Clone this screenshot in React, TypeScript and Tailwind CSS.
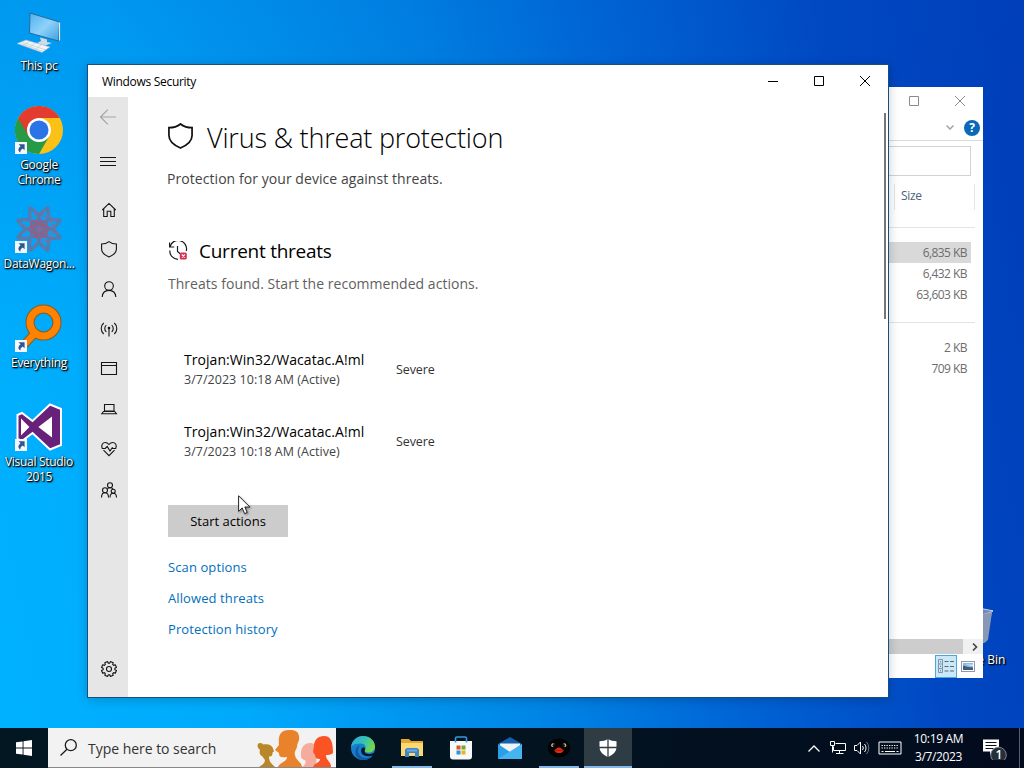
import type { ReactNode } from "react";
import clsx from "clsx";

type IconProps = {
  className?: string;
};

type Threat = {
  name: string;
  detected: string;
  severity: string;
};

const threats: Threat[] = [
  { name: "Trojan:Win32/Wacatac.A!ml", detected: "3/7/2023 10:18 AM (Active)", severity: "Severe" },
  { name: "Trojan:Win32/Wacatac.A!ml", detected: "3/7/2023 10:18 AM (Active)", severity: "Severe" },
];

const gearPath = () => {
  const teeth = 8;
  const points: string[] = [];
  for (let i = 0; i < teeth; i++) {
    const base = (i / teeth) * Math.PI * 2;
    const corners: [number, number][] = [
      [-0.27, 5.9],
      [-0.2, 7.6],
      [0.2, 7.6],
      [0.27, 5.9],
    ];
    corners.forEach(([offset, r]) => {
      const x = 8 + r * Math.cos(base + offset);
      const y = 8 + r * Math.sin(base + offset);
      points.push(`${x.toFixed(2)} ${y.toFixed(2)}`);
    });
  }
  return `M${points.join("L")}Z`;
};

/* ---------- desktop icons ---------- */

function ShortcutArrow() {
  return (
    <svg viewBox="0 0 12 12" className="absolute bottom-0 left-0 size-3">
      <rect width="12" height="12" fill="#f4f8fc" />
      <path d="M3.6 2.3h6v6L7.7 6.5C5.8 7.8 5.2 8.8 5.4 10.6 3 9.3 2.6 6.6 5.5 4.3z" fill="#2c5592" />
    </svg>
  );
}

function PcIcon() {
  return (
    <svg viewBox="0 0 48 48" className="size-12">
      <defs>
        <linearGradient id="screen" x1="0" y1="0" x2="1" y2="1">
          <stop offset="0" stopColor="#4fb0ee" />
          <stop offset="0.5" stopColor="#8ed2fa" />
          <stop offset="1" stopColor="#3d9fe4" />
        </linearGradient>
      </defs>
      <path d="M15 6l29.5 9-1 19-29-8z" fill="url(#screen)" stroke="#27689b" strokeWidth="1" />
      <path d="M44.5 15.5v18" stroke="#dfe9f0" strokeWidth="1.2" />
      <path d="M25 30.5l7 2v2.5l5 1-8 3-7-3 4-2z" fill="#cfdbe4" />
      <path d="M11 33l24 7-8 5.5-25-9z" fill="#f2f5f7" stroke="#9db4c4" strokeWidth="0.6" />
      <path d="M8 35.5l23 7.5M6 36.5l22 8M14 34.5l-6 4.5M20 36l-6 5M26 38l-6 5" stroke="#b7c5cf" strokeWidth="0.6" />
    </svg>
  );
}

function ChromeIcon() {
  return (
    <svg viewBox="0 0 48 48" className="size-12">
      <circle cx="24" cy="24" r="24" fill="#fbc116" />
      <path d="M24 24L3.2 12A24 24 0 0 0 24 48l10.4-18z" fill="#269a46" />
      <path d="M24 12h20.8A24 24 0 0 0 3.2 12l10.4 18L24 24z" fill="#e33b2e" />
      <circle cx="24" cy="24" r="12" fill="#fff" />
      <circle cx="24" cy="24" r="9.5" fill="#2b74e8" />
    </svg>
  );
}

function DataWagonIcon() {
  const angles = [0, 45, 90, 135];
  return (
    <svg viewBox="0 0 48 48" className="size-12">
      <g fill="none" strokeWidth="1.4">
        {angles.map((a) => (
          <g key={a} transform={`rotate(${a} 24 24)`}>
            <path d="M16 2l8 7 8-7 1 13-9 14-9-14zM16 46l8-7 8 7 1-13-9-14-9 14z" stroke="#5f75a5" />
            <path d="M13 6l11 20L35 6M18 12l6-5 6 5M13 42l11-20 11 20" stroke="#8a6c98" strokeWidth="1" />
            <ellipse cx="24" cy="24" rx="5" ry="10" stroke="#a0587c" />
          </g>
        ))}
      </g>
    </svg>
  );
}

function EverythingIcon() {
  return (
    <svg viewBox="0 0 48 48" className="size-12">
      <path d="M20 29L8 42" stroke="#8a5a1c" strokeWidth="8.5" />
      <circle cx="28.5" cy="18.5" r="13.5" fill="none" stroke="#8a5a1c" strokeWidth="9" />
      <circle cx="28.5" cy="18.5" r="13.5" fill="none" stroke="#ff8200" strokeWidth="7" />
      <path d="M21 28L8 42" stroke="#ff8200" strokeWidth="6.5" />
    </svg>
  );
}

function VisualStudioIcon() {
  return (
    <svg viewBox="0 0 48 48" className="size-12">
      <path
        fillRule="evenodd"
        d="M35 1.5l11 4.5v36l-11 4.5L17.5 30 7 38l-4.5-2V12L7 10l10.5 8zM36 15.5L25 24l11 8.5zM7 18v12l6-6z"
        fill="#68217a"
        stroke="#fff"
        strokeWidth="2"
      />
      <path d="M36 15.5L25 24l11 8.5zM7 18v12l6-6z" fill="#fff" />
    </svg>
  );
}

type DesktopIconProps = {
  label: string;
  shortcut?: boolean;
  children: ReactNode;
};

function DesktopIcon({ label, shortcut, children }: DesktopIconProps) {
  return (
    <div className="flex h-[99px] w-[78px] flex-col items-center">
      <div className="relative">
        {children}
        {shortcut && <ShortcutArrow />}
      </div>
      <span className="mt-[3px] w-[74px] text-center text-[12px] leading-[15px] tracking-[-0.3px] text-white [text-shadow:1px_1px_1px_#000,1px_1px_2px_#000,0_0_2px_#0008]">
        {label}
      </span>
    </div>
  );
}

/* ---------- outline icons of the security app ---------- */

function Outline({ children, className }: IconProps & { children: ReactNode }) {
  return (
    <svg viewBox="0 0 16 16" fill="none" stroke="currentColor" strokeWidth="1.1" className={clsx("overflow-visible", className ?? "size-4")}>
      {children}
    </svg>
  );
}

const shieldPath = "M8 .6C10 2.2 12.6 3 15.4 3v5c0 3.6-3.2 6.2-7.4 8C3.8 14.2.6 11.6.6 8V3C3.4 3 6 2.2 8 .6z";

const navItems: { id: string; height: string; icon: ReactNode }[] = [
  { id: "back", height: "h-10", icon: <Outline className="size-4 text-[#a3a3a3]"><path d="M16 8H.5M7.8.6L.5 8l7.3 7.4" /></Outline> },
  { id: "menu", height: "h-12", icon: <Outline><path d="M0 4.5h16M0 8.5h16M0 12.5h16" /></Outline> },
  { id: "home", height: "h-[50px]", icon: <Outline className="ml-px size-4"><path d="M1.3 8L8 1.4 14.7 8M2.7 6.8v7.7h3.5V9.3h3.6v5.2h3.5V6.8" /></Outline> },
  { id: "virus", height: "h-[28px]", icon: <Outline className="ml-px size-4"><path d={shieldPath} /></Outline> },
  { id: "account", height: "h-[52px]", icon: <Outline className="ml-px size-4"><circle cx="8" cy="5" r="4.3" /><path d="M1.2 16c.3-4 3-6.6 6.8-6.6s6.5 2.6 6.8 6.6" /></Outline> },
  { id: "firewall", height: "h-[28px]", icon: <Outline className="ml-px size-4"><path d="M8 7v8.500M5.3 4.2a4.300 4.300 0 0 0 0 6.600M10.7 4.2a4.300 4.300 0 0 1 0 6.600M2.700 2a7.300 7.300 0 0 0 0 11M13.300 2a7.300 7.300 0 0 1 0 11" /><circle cx="8" cy="7" r="0.8" fill="currentColor" /></Outline> },
  { id: "browser", height: "h-[52px]", icon: <Outline className="ml-px size-4"><path d="M.5 1.5h15v12H.5zM.5 4.5h15" /></Outline> },
  { id: "device", height: "h-[28px]", icon: <Outline className="ml-px size-4"><path d="M3.5 3.5H13V10H3.500zM2.500 10.500L.800 12.700h14.600l-1.700-2.200z" /></Outline> },
  { id: "health", height: "h-[52px]", icon: <Outline className="ml-px size-4"><path d="M1.200 7.200C-.200 3.700 2 1.500 4.300 1.500 6 1.500 7 2.300 8 3.500c1-1.200 2-2 3.700-2C14 1.500 16.200 3.700 14.800 7.200M2.500 9.200L8 14.700l5.500-5.500M.800 7.500h3.400l2-2 2.800 4.500 2.200-3.300 1 .800h3" /></Outline> },
  { id: "family", height: "h-[30px]", icon: <Outline className="ml-px size-4"><circle cx="9" cy="3.2" r="2.5" /><circle cx="4" cy="8.2" r="2.5" /><circle cx="12.2" cy="9.3" r="2" /><path d="M.500 15.500c0-3 1.500-4.800 3.500-4.800s3.500 1.800 3.500 4.800M9 15.500c0-2.500 1.200-4.200 3.200-4.200s3.300 1.700 3.300 4.200M6.500 6.500c.700-.500 1.500-.800 2.500-.800 1.800 0 2.800.800 3.300 1.800" /></Outline> },
];

function Sidebar() {
  return (
    <nav className="flex w-10 flex-col bg-[#e6e6e6] text-[#151515]">
      {navItems.map((item) => (
        <div key={item.id} className={clsx("flex shrink-0 items-center justify-center", item.height)}>
          {item.icon}
        </div>
      ))}
      <div className="mt-auto mb-5 flex justify-center pl-px">
        <Outline>
          <path d={gearPath()} transform="rotate(22.5 8 8)" strokeLinejoin="round" />
          <circle cx="8" cy="8" r="2.5" />
        </Outline>
      </div>
    </nav>
  );
}

function ThreatHistoryIcon() {
  return (
    <svg viewBox="0 0 20 20" fill="none" stroke="#1a1a1a" strokeWidth="1.2" className="size-5">
      <path d="M1.600 1.500v4.500h4.600M1.900 5.800A8.300 8.300 0 0 1 18.300 10M10 18.300A8.300 8.300 0 0 1 1.800 9.500M9.500 5v5.500l3 2.500" />
      <rect x="11.8" y="11.5" width="7" height="7" rx="1.5" fill="#d9304e" stroke="none" />
      <path d="M13.800 13.500l3 3M16.800 13.500l-3 3" stroke="#fff" strokeWidth="1.1" />
    </svg>
  );
}

function SecurityWindow() {
  return (
    <section className="absolute top-[64px] left-[87px] flex h-[634px] w-[802px] flex-col border border-[#174f7c] bg-white text-[#1c1c1c] shadow-[0_2px_10px_rgba(0,0,0,0.2)]">
      <header className="flex h-8 shrink-0 items-center justify-between pl-3.5">
        <h1 className="pt-0.5 text-[12px] tracking-[-0.3px] text-black">Windows Security</h1>
        <div className="flex text-black">
          {["M0 5.5h10", "M.5.5h9v9h-9z", "M0 0l10 10M10 0L0 10"].map((d) => (
            <div key={d} className="flex w-[46px] items-center justify-center">
              <svg viewBox="0 0 10 10" fill="none" stroke="currentColor" className="size-2.5 overflow-visible">
                <path d={d} />
              </svg>
            </div>
          ))}
        </div>
      </header>

      <div className="flex min-h-0 flex-1">
        <Sidebar />
        <main className="flex-1 pl-10">
          <div className="flex h-[84px] items-center gap-[14px]">
            <svg viewBox="0 0 16 16.6" fill="none" stroke="#111" strokeWidth="1.1" className="-mt-1.5 h-[26px] w-[25px]">
              <path d={shieldPath} />
            </svg>
            <h2 className="pb-0.5 text-[27px] leading-9 font-light tracking-[-0.18px] text-black">Virus &amp; threat protection</h2>
          </div>
          <p className="-mt-3.5 -ml-px text-[14px] leading-6 tracking-[0.06px] text-[#444]">Protection for your device against threats.</p>

          <div className="mt-[44px] flex h-8 items-center gap-[11px]">
            <ThreatHistoryIcon />
            <h3 className="text-[19px] tracking-[-0.25px] text-black">Current threats</h3>
          </div>
          <p className="mt-[5px] text-[14px] leading-6 tracking-[0.03px] text-[#5f5f5f]">Threats found. Start the recommended actions.</p>

          <ul className="mt-[45px] ml-4">
            {threats.map((threat, i) => (
              <li key={i} className="flex h-[72px] pt-2">
                <div className="w-[212px]">
                  <p className="text-[14px] leading-[22px] tracking-[0.05px] text-black">{threat.name}</p>
                  <p className="text-[12.5px] leading-[18px] tracking-[0.03px] text-[#444]">{threat.detected}</p>
                </div>
                <span className="mt-[11px] text-[12.5px] leading-[20px] tracking-[-0.1px] text-[#333]">{threat.severity}</span>
              </li>
            ))}
          </ul>

          <button className="mt-5 flex h-8 w-[120px] items-center justify-center bg-[#cccccc] pt-0.5 text-[13px] text-black">Start actions</button>
          <div className="mt-[15px] flex flex-col items-start text-[13px] leading-[31px] tracking-[0.1px] text-[#0070c0]">
            <a>Scan options</a>
            <a>Allowed threats</a>
            <a>Protection history</a>
          </div>
        </main>
        <div className="mt-4 mr-0.5 h-[206px] w-0.5 bg-[#767676]" />
      </div>
    </section>
  );
}

/* ---------- explorer window behind ---------- */

function ExplorerWindow() {
  return (
    <section className="absolute top-[87px] left-[583px] flex h-[591px] w-[400px] flex-col items-end bg-white text-[12px] text-[#6d6d6d]">
      <div className="flex h-[28px] items-center text-[#8b8b8b]">
        {["M.5.5h9v9h-9z", "M0 0l10 10M10 0L0 10"].map((d) => (
          <div key={d} className="flex w-[46px] justify-center">
            <svg viewBox="0 0 10 10" fill="none" stroke="currentColor" className="size-2.5 overflow-visible">
              <path d={d} />
            </svg>
          </div>
        ))}
      </div>
      <div className="flex h-[26px] w-full items-center justify-end gap-[10px] border-b border-[#dadbdc] pr-[3px]">
        <svg viewBox="0 0 8 5" fill="none" stroke="#a4a4a4" strokeWidth="1.5" className="w-2">
          <path d="M.5.5L4 4 7.5.5" />
        </svg>
        <span className="flex size-4 items-center justify-center rounded-full bg-[#0b68b8] text-[12px] font-bold text-white">?</span>
      </div>
      <div className="mt-[5px] mr-3 h-[30px] w-[300px] border border-[#d2d2d2]" />
      <div className="mt-2 mr-2 flex h-[26px] w-[81px] items-center border-x border-[#e5e5e5] pb-0.5 pl-[6px] tracking-[-0.3px] text-[#4c607a]">Size</div>
      <div className="mt-[17px] mr-2 h-px w-[300px] bg-[#e4e4e4]" />
      <div className="mt-[14px] mr-3 flex w-[300px] flex-col text-right leading-[21px] tracking-[-0.55px]">
        <span className="h-[21px] bg-[#d9d9d9] pr-1">6,835 KB</span>
        <span className="pr-1">6,432 KB</span>
        <span className="pr-1">63,603 KB</span>
      </div>
      <div className="mt-[17px] mr-2 h-px w-[300px] bg-[#e4e4e4]" />
      <div className="mt-[14px] mr-4 flex flex-col text-right leading-[21px] tracking-[-0.55px]">
        <span>2 KB</span>
        <span>709 KB</span>
      </div>
      <div className="mt-auto flex h-[15px] w-full justify-end bg-[#f0f0f0]">
        <div className="h-full w-[380px] bg-[#cdcdcd]" />
        <div className="flex w-5 shrink-0 items-center justify-center">
          <svg viewBox="0 0 6 8" fill="none" stroke="#444" strokeWidth="1.6" className="ml-1 h-2">
            <path d="M1 .5L4.5 4 1 7.5" />
          </svg>
        </div>
      </div>
      <div className="flex h-[24px] items-center gap-1 pr-2">
        <div className="flex h-[23px] w-[22px] items-center justify-center border border-[#4fa6d8] bg-[#cbe8f8]">
          <svg viewBox="0 0 16 14" fill="none" className="w-4">
            <path d="M.5.5h4v13h-4zM.5 5h4M.5 9.5h4" stroke="#8195a5" />
            <path d="M2 2.8h1M2 7.3h1M2 11.8h1" stroke="#3575a8" />
            <path d="M6.5 2.5h4M12 2.5h4M6.5 7.5h4M12 7.5h4M6.5 12h4M12 12h4" stroke="#5d6870" />
          </svg>
        </div>
        <svg viewBox="0 0 14 11" className="w-3.5">
          <rect x="0.5" y="0.5" width="13" height="10" fill="#fff" stroke="#8d99b0" />
          <rect x="2" y="2" width="10" height="7" fill="#8db9df" />
          <path d="M2 4.5l5 1.500 5 .500V9H2z" fill="#3f5d7a" />
          <path d="M4 3.5h8v1.700z" fill="#dcecf8" />
        </svg>
      </div>
    </section>
  );
}

/* ---------- taskbar ---------- */

function SearchFigures() {
  return (
    <svg viewBox="257 729 78 39" className="h-[39px] w-[78px]">
      <path d="M302 768c4-3 4-4 3-7-5-1-4-4-4-7 0-6 4-10 9-10 4 0 7 2 7 8l-1 16z" fill="#f6ac9c" />
      <path d="M259 768c3-2 6-4 6-7l-3-4c-2-1-3-3-2-6l-1-1c-2-2-2-6 1-6 2 0 3 1 3 1.500 4-1 9 0 10 4l1 3-1.500 1c0 3-.500 4-3.500 4 0 4 1 6 6 10.500z" fill="#b9872a" />
      <path d="M278 768c2-5 9-5 9-10-6 1-8 0-8-4l-4-3 4-5c-1-9 1-15 10-15 7 0 11 2 10 10-1 3-2 4-2 7-1 3-3 5-2 8 1 6 6 6 7 12z" fill="#e8832b" />
      <path d="M313 768c1-4 7-4 7-8-3 0-5-1-5-4l-2-3 1-6c0-6 4-10 10-10 7 0 9 6 9 17-2 2-5 2-7 2 0 6 5 6 5 12z" fill="#fa5324" />
    </svg>
  );
}

function EdgeIcon() {
  return (
    <svg viewBox="0 0 24 24" className="size-6">
      <defs>
        <linearGradient id="edgeTop" x1="0" y1="0" x2="1" y2="0.4">
          <stop offset="0" stopColor="#2aa6e0" />
          <stop offset="0.6" stopColor="#35c3ae" />
          <stop offset="1" stopColor="#72d64d" />
        </linearGradient>
      </defs>
      <circle cx="12" cy="12" r="12" fill="#1680cf" />
      <path d="M0 11C1 4.500 6 0 12 0c7 0 12 5 12 10.500 0 4-3 6-6.500 6-3 0-4.500-1-3.500-2.500C16 11 14 7.500 9.500 7.500 5 7.500 1.500 8.500 0 11z" fill="url(#edgeTop)" />
      <path d="M9.500 9.500C6.500 11 6 16 9 19.500c3 3.500 8 3 12.500.500-3 3.500-7 4.500-11 3.900C5 22.500 3.500 18 4.500 14c.700-2.700 2.500-4.500 5-4.500z" fill="#1459a6" />
      <path d="M13.800 14.200c-1.300 3.800 4 5.300 9.700 2.300l1 1.500-2.500 1.500C15 21.500 10.500 19 10.200 15.500c-.200-2.500.600-4 1.900-4 1.700 0 2.400 1 1.700 2.700z" fill="#071721" />
    </svg>
  );
}

function FolderIcon() {
  return (
    <svg viewBox="0 0 22 20" className="h-5 w-[22px]">
      <path d="M0 1h8l2 2h12v15H0z" fill="#e4a72f" />
      <path d="M0 5h22v13H0z" fill="#fcd873" />
      <path d="M4 19v-7.500L6 10h10l2 1.500V19h-4v-4H8v4z" fill="#3d87c9" />
      <path d="M6 11.5h10v2H6z" fill="#69abe0" />
    </svg>
  );
}

function StoreIcon() {
  return (
    <svg viewBox="0 0 24 24" className="size-6">
      <path d="M1 5h22v15.500c0 2-1 3-3 3H4c-2 0-3-1-3-3z" fill="#f6f8fa" />
      <path d="M6.500 6.500V2.500C6.500 1.500 7 1 8 1h8c1 0 1.500.500 1.500 1.500v4" fill="none" stroke="#3a97dc" strokeWidth="1.6" />
      <path d="M7.5 9.5h4v4h-4z" fill="#e4512b" />
      <path d="M12.5 9.5h4v4h-4z" fill="#74a92c" />
      <path d="M7.5 14.5h4v4h-4z" fill="#2e96d4" />
      <path d="M12.5 14.5h4v4h-4z" fill="#efaf27" />
    </svg>
  );
}

function MailIcon() {
  return (
    <svg viewBox="0 0 24 22" className="h-[22px] w-6">
      <path d="M0 7L12 0l12 7v8H0z" fill="#1460ac" />
      <path d="M2 6.5h20V15H2z" fill="#f0f4f7" />
      <path d="M0 7l12 8L24 7v15H0z" fill="#2b9fe6" />
      <path d="M0 22l24-15v15z" fill="#45b5f1" />
    </svg>
  );
}

function PenguinIcon() {
  return (
    <svg viewBox="0 0 22 20" className="h-5 w-[22px]">
      <ellipse cx="11" cy="10" rx="11" ry="9.5" fill="#020203" />
      <ellipse cx="5" cy="7.3" rx="1.8" ry="2" fill="#c9bba6" />
      <ellipse cx="16.5" cy="7.3" rx="1.8" ry="2" fill="#c9bba6" />
      <circle cx="6" cy="7.6" r="1.5" fill="#111" />
      <circle cx="15.5" cy="7.600" r="1.5" fill="#111" />
      <path d="M6 12c1.800-.500 3-2.500 5-2.500s3.200 2 5 2.500c-1.500 2.500-2.500 3-5 3s-3.500-.500-5-3z" fill="#e02a18" />
      <path d="M7 12.300h8" stroke="#8d1209" strokeWidth="0.7" />
    </svg>
  );
}

function DefenderIcon() {
  return (
    <svg viewBox="0 0 18 18" className="size-[18px]">
      <path d="M9 0c2.500 1.500 5 2.200 8.500 2.200V8c0 5-4 8-8.500 10C4.500 16 .500 13 .500 8V2.200C4 2.200 6.500 1.500 9 0z" fill="#fff" />
      <path d="M9 0v18M0 8.500h18" stroke="#303c44" strokeWidth="1.3" />
    </svg>
  );
}

const apps: { id: string; icon: ReactNode; state: "idle" | "running" | "active" }[] = [
  { id: "edge", icon: <EdgeIcon />, state: "idle" },
  { id: "explorer", icon: <FolderIcon />, state: "running" },
  { id: "store", icon: <StoreIcon />, state: "idle" },
  { id: "mail", icon: <MailIcon />, state: "idle" },
  { id: "penguin", icon: <PenguinIcon />, state: "running" },
  { id: "defender", icon: <DefenderIcon />, state: "active" },
];

function Taskbar() {
  return (
    <footer className="absolute inset-x-0 bottom-0 flex h-10 bg-linear-to-r from-[#031722] via-[#031420] to-[#020b1e] text-white">
      <div className="flex w-12 items-center justify-center">
        <svg viewBox="0 0 16 16" fill="#fff" className="size-4">
          <path d="M0 2.300L6.600 1.400v6.100H0zM7.500 1.300L16 0v7.500H7.500zM0 8.500h6.600v6.100L0 13.700zM7.500 8.500H16V16l-8.500-1.300z" />
        </svg>
      </div>
      <div className="flex w-[288px] items-center border-b border-[#888] bg-[#f2f2f2] pl-3 text-[#333]">
        <svg viewBox="0 0 17 17" fill="none" stroke="#1c1c1c" strokeWidth="1.3" className="size-[17px]">
          <circle cx="10.8" cy="6.2" r="5.5" />
          <path d="M7 10.200L.500 16.500" />
        </svg>
        <span className="ml-[11px] pt-0.5 text-[14px] tracking-[-0.03px]">Type here to search</span>
        <div className="mr-px ml-auto self-end">
          <SearchFigures />
        </div>
      </div>
      <div className="ml-[3px] flex gap-px">
        {apps.map((app) => (
          <div key={app.id} className={clsx("flex w-12 flex-col items-center", app.state === "active" && "bg-[#303c44]")}>
            <div className="flex h-[38px] items-center pt-0.5">{app.icon}</div>
            {app.state !== "idle" && <div className={clsx("h-0.5 bg-[#82b8ea]", app.state === "active" ? "w-12" : "w-10")} />}
          </div>
        ))}
      </div>
      <div className="ml-auto flex items-center">
        <svg viewBox="0 0 12 7" fill="none" stroke="#fff" strokeWidth="1.3" className="w-3">
          <path d="M.5 6.5L6 1l5.500 5.500" />
        </svg>
        <svg viewBox="0 0 16 14" fill="none" stroke="#fff" className="ml-2.5 h-3.5 w-4">
          <path d="M5.500 2.500h10v7h-12v-4M9.500 9.500v3M6 12.500h7.500M.500.500h4v4h-4zM2.500 4.500v7" />
        </svg>
        <svg viewBox="0 0 16 14" fill="none" stroke="#fff" className="ml-2 h-3.5 w-4">
          <path d="M.500 4.500H3l3.500-3.500v12L3 9.500H.500zM8.500 5a3 3 0 0 1 0 4M10.500 3a6 6 0 0 1 0 8" />
          <path d="M12.500 1a9 9 0 0 1 0 12" stroke="#6b7782" />
        </svg>
        <svg viewBox="0 0 24 14" fill="none" stroke="#fff" className="ml-2 h-3.5 w-6">
          <path d="M1 1h22v12H1z" />
          <path d="M3.5 4.5h17M3.5 7h17" strokeDasharray="1.3 1.2" />
          <path d="M3.5 10.5h2M7 10.5h10M18.5 10.5h2" />
        </svg>
        <div className="ml-2.5 flex w-[54px] flex-col items-center pr-px text-[12px] leading-[18px] tracking-[-0.35px] whitespace-nowrap">
          <span>10:19 AM</span>
          <span>3/7/2023</span>
        </div>
        <div className="relative ml-[17px] h-6 w-6">
          <svg viewBox="0 0 24 24" className="size-6">
            <path d="M0 3.500h16v12h-6l-3 3.500v-3.500H0z" fill="#fff" />
            <path d="M2.500 6.500h11M2.500 9.500h11M2.500 12.500h8" stroke="#05101d" />
            <circle cx="15.5" cy="19" r="7.8" fill="#25303a" stroke="#7d858c" />
          </svg>
          <span className="absolute top-[11px] left-[8px] w-4 text-center text-[12px] leading-4 font-semibold">1</span>
        </div>
        <div className="ml-3 h-10 w-px bg-[#53616f]" />
        <div className="w-1" />
      </div>
    </footer>
  );
}

function RecycleBin() {
  return (
    <div className="absolute top-[605px] left-[935px] flex w-[78px] flex-col items-center">
      <svg viewBox="0 0 48 48" className="-ml-2.5 size-12">
        <path d="M4 6l24-4 19 5-6 30-18 6-14-5z" fill="#8ea3c3" />
        <path d="M4 6l24-4 21 4-15 5z" fill="#6f88b4" stroke="#c6d2e4" />
        <path d="M32 11l15-4-4 28-9 6z" fill="#8798b4" />
      </svg>
      <span className="-mt-px text-[12px] leading-[15px] whitespace-nowrap text-white [text-shadow:1px_1px_1px_#000,1px_1px_2px_#000]">Recycle Bin</span>
    </div>
  );
}

export default function App() {
  return (
    <div className="relative h-[768px] w-[1024px] overflow-hidden bg-[linear-gradient(165deg,rgba(0,90,200,0.24)_0%,rgba(0,90,200,0)_38%),linear-gradient(79deg,#00b2ff_0%,#00a9fb_22%,#0087e6_46%,#0064d5_64%,#0047c2_82%,#003db8_100%)] font-['Open_Sans','Noto_Sans',sans-serif]">
      <div className="flex w-[78px] flex-col pt-[7px]">
        <DesktopIcon label="This pc"><PcIcon /></DesktopIcon>
        <DesktopIcon label="Google Chrome" shortcut><ChromeIcon /></DesktopIcon>
        <DesktopIcon label="DataWagon..." shortcut><DataWagonIcon /></DesktopIcon>
        <DesktopIcon label="Everything" shortcut><EverythingIcon /></DesktopIcon>
        <DesktopIcon label="Visual Studio 2015" shortcut><VisualStudioIcon /></DesktopIcon>
      </div>

      <RecycleBin />
      <ExplorerWindow />
      <SecurityWindow />
      <Taskbar />

      <svg viewBox="0 0 13 20" className="absolute top-[495px] left-[238px] h-5 w-[13px] drop-shadow-[1px_1px_1px_rgba(0,0,0,0.4)]">
        <path d="M.6.8v15.500l3.600-3.400 2.400 5.700 2.600-1.100-2.400-5.500h5z" fill="#fff" stroke="#111" strokeWidth="0.9" />
      </svg>
    </div>
  );
}
